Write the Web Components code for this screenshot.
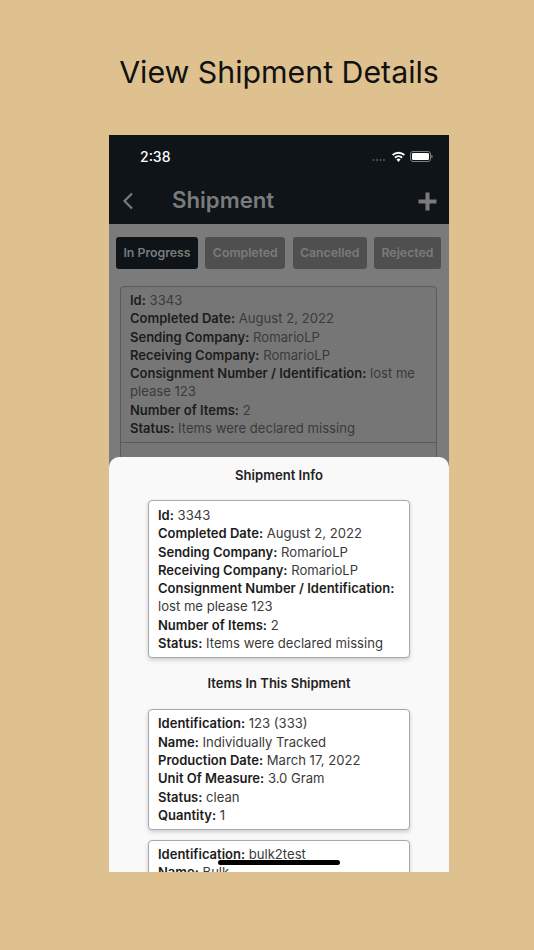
<!DOCTYPE html>
<html lang="en">
<head>
<meta charset="utf-8">
<title>View Shipment Details</title>
<style>
	html, body { margin: 0; padding: 0; background: #dfc18f; }
	body { font-family: "Inter", "Liberation Sans", sans-serif; }
</style>
</head>
<body>
<promo-page heading="View Shipment Details">
	<phone-frame>
		<status-bar slot="top" time="2:38"></status-bar>
		<nav-header slot="top" heading="Shipment"></nav-header>

		<tab-strip>
			<tab-button active style="width:82px">In Progress</tab-button>
			<tab-button style="width:80px">Completed</tab-button>
			<tab-button style="width:74px">Cancelled</tab-button>
			<tab-button style="width:67px">Rejected</tab-button>
		</tab-strip>

		<shipment-row>
			<info-line label="Id">3343</info-line>
			<info-line label="Completed Date">August 2, 2022</info-line>
			<info-line label="Sending Company">RomarioLP</info-line>
			<info-line label="Receiving Company">RomarioLP</info-line>
			<info-line label="Consignment Number / Identification">lost me please 123</info-line>
			<info-line label="Number of Items">2</info-line>
			<info-line label="Status">Items were declared missing</info-line>
		</shipment-row>
		<shipment-row></shipment-row>

		<bottom-sheet slot="over">
			<sheet-title>Shipment Info</sheet-title>
			<info-card>
				<info-line label="Id">3343</info-line>
				<info-line label="Completed Date">August 2, 2022</info-line>
				<info-line label="Sending Company">RomarioLP</info-line>
				<info-line label="Receiving Company">RomarioLP</info-line>
				<info-line label="Consignment Number / Identification">lost me please 123</info-line>
				<info-line label="Number of Items">2</info-line>
				<info-line label="Status">Items were declared missing</info-line>
			</info-card>
			<sheet-title>Items In This Shipment</sheet-title>
			<info-card item>
				<info-line label="Identification">123 (333)</info-line>
				<info-line label="Name">Individually Tracked</info-line>
				<info-line label="Production Date">March 17, 2022</info-line>
				<info-line label="Unit Of Measure">3.0 Gram</info-line>
				<info-line label="Status">clean</info-line>
				<info-line label="Quantity">1</info-line>
			</info-card>
			<info-card item style="margin-top:10px">
				<info-line label="Identification">bulk2test</info-line>
				<info-line label="Name">Bulk</info-line>
			</info-card>
		</bottom-sheet>
		<home-indicator slot="over"></home-indicator>
	</phone-frame>
</promo-page>

<script>
	const define = (name, css, html, setup) => {
		customElements.define(name, class extends HTMLElement {
			constructor() {
				super();
				this.attachShadow({ mode: "open" });
				const template = document.createElement("template");
				template.innerHTML = `<style>${css}</style>${html}`;
				this.shadowRoot.appendChild(template.content.cloneNode(true));
			}

			connectedCallback() {
				if (setup) {
					setup(this, this.shadowRoot);
				}
			}
		});
	};

	define("promo-page", `
		:host { display: flex; flex-direction: column; align-items: center; width: 534px; height: 950px; box-sizing: border-box; padding-left: 24px; background: #dfc18f; overflow: hidden; }
		h1 { margin: 0; height: 135px; box-sizing: border-box; padding-top: 52px; font: 400 30.3px/40px "Inter", "Liberation Sans", sans-serif; color: #111; width: 100%; text-align: center; }
	`, `<h1></h1><slot></slot>`, (el, root) => {
		root.querySelector("h1").textContent = el.getAttribute("heading");
	});

	define("phone-frame", `
		:host { display: flex; flex-direction: column; position: relative; width: 340px; height: 737px; overflow: hidden; background: #7b7b7b; }
		main { display: flex; flex-direction: column; }
	`, `<slot name="top"></slot><main><slot></slot></main><slot name="over"></slot>`);

	define("status-bar", `
		:host { display: flex; align-items: center; height: 44px; padding: 0 15px 0 31px; background: #0e1418; color: #fff; box-sizing: border-box; }
		span { flex: 1; font: 500 14px/18px "Inter", sans-serif; margin-top: -1px; }
		svg { display: block; }
	`, `<span></span>
		<svg width="62" height="14" viewBox="0 0 62 14">
			<g fill="#55595c"><circle cx="1.5" cy="10" r="1"/><circle cx="5" cy="10" r="1"/><circle cx="8.5" cy="10" r="1"/><circle cx="12" cy="10" r="1"/></g>
			<path fill="#fff" d="M20 4.2a9.6 9.6 0 0 1 13 0l-1.3 1.5a7.6 7.6 0 0 0-10.4 0zM22.3 6.9a6.2 6.2 0 0 1 8.4 0l-1.3 1.5a4.2 4.2 0 0 0-5.8 0zM24.5 9.5a3 3 0 0 1 4 0l-2 2.4z"/>
			<rect x="38.5" y="1.5" width="20" height="10" rx="2.5" fill="none" stroke="#7d8083"/>
			<rect x="40" y="3" width="17" height="7" rx="1.3" fill="#fff"/>
			<rect x="59.3" y="5" width="1.2" height="3" rx=".6" fill="#7d8083"/>
		</svg>`, (el, root) => {
		root.querySelector("span").textContent = el.getAttribute("time");
	});

	define("nav-header", `
		:host { display: flex; align-items: center; height: 45px; padding: 0 12px 0 13px; background: #0e1418; color: #7b7b7b; box-sizing: border-box; }
		h2 { flex: 1; margin: -4px 0 0 38px; font: 600 22.2px/30px "Inter", sans-serif; }
		svg { display: block; margin-top: -1px; }
	`, `<svg width="12" height="18" viewBox="0 0 12 18"><path d="M10 1.5 2.5 9l7.5 7.5" fill="none" stroke="#7b7b7b" stroke-width="2.2"/></svg>
		<h2></h2>
		<svg width="19" height="19" viewBox="0 0 19 19"><path d="M9.5 0.5v18M0.5 9.5h18" fill="none" stroke="#7b7b7b" stroke-width="4"/></svg>`, (el, root) => {
		root.querySelector("h2").textContent = el.getAttribute("heading");
	});

	define("tab-strip", `
		:host { display: flex; justify-content: space-between; padding: 13px 8px 0 7px; }
	`, `<slot></slot>`);

	define("tab-button", `
		:host { display: flex; align-items: center; justify-content: center; height: 32px; border-radius: 3px; background: #4f4f4f; color: #7b7b7b; font: 600 12.3px/16px "Inter", sans-serif; box-sizing: border-box; }
		:host([active]) { background: #0e1418; }
	`, `<slot></slot>`);

	define("shipment-row", `
		:host { display: block; margin: 0 12px 0 11px; padding: 4px 9px 5px; border: 1px solid #5a5a5a; border-radius: 4px; background: #767676; color: #1c1c1c; min-height: 40px; }
		:host(:first-of-type) { margin-top: 17px; border-radius: 4px 4px 0 0; }
		:host(:last-of-type) { margin-top: -1px; border-radius: 0; }
	`, `<slot></slot>`);

	define("info-line", `
		:host { display: block; font: 400 13.1px/18.3px "Inter", sans-serif; color: #3a3a3a; }
		b { font-size: 13px; font-weight: 600; color: #1c1c1c; }
	`, `<b></b> <slot></slot>`, (el, root) => {
		root.querySelector("b").textContent = `${el.getAttribute("label")}:`;
	});

	define("bottom-sheet", `
		:host { display: flex; flex-direction: column; align-items: center; position: absolute; left: 0; right: 0; top: 322px; bottom: 0; overflow: hidden; background: #f9f9f9; border-radius: 10px 10px 0 0; color: #1c1c1c; }
	`, `<slot></slot>`);

	define("sheet-title", `
		:host { display: block; box-sizing: border-box; padding-top: 9px; height: 36px; flex: none; font: 600 13.1px/18px "Inter", sans-serif; text-align: center; color: #222; }
		:host(:not(:first-child)) { padding-top: 16px; height: 44px; font-size: 13px; }
	`, `<slot></slot>`);

	define("info-card", `
		:host { display: block; flex: none; width: 262px; box-sizing: border-box; margin-top: 7px; padding: 5px 9px 5px; background: #fff; border: 1px solid #a6a8ab; border-radius: 4px; box-shadow: 0 2px 4px rgba(0,0,0,.18); }
		:host([item]) { padding-top: 4px; }
	`, `<slot></slot>`);

	define("home-indicator", `
		:host { position: absolute; left: 109px; bottom: 7px; width: 122px; height: 5px; border-radius: 3px; background: #000; }
	`, ``);
</script>
</body>
</html>
